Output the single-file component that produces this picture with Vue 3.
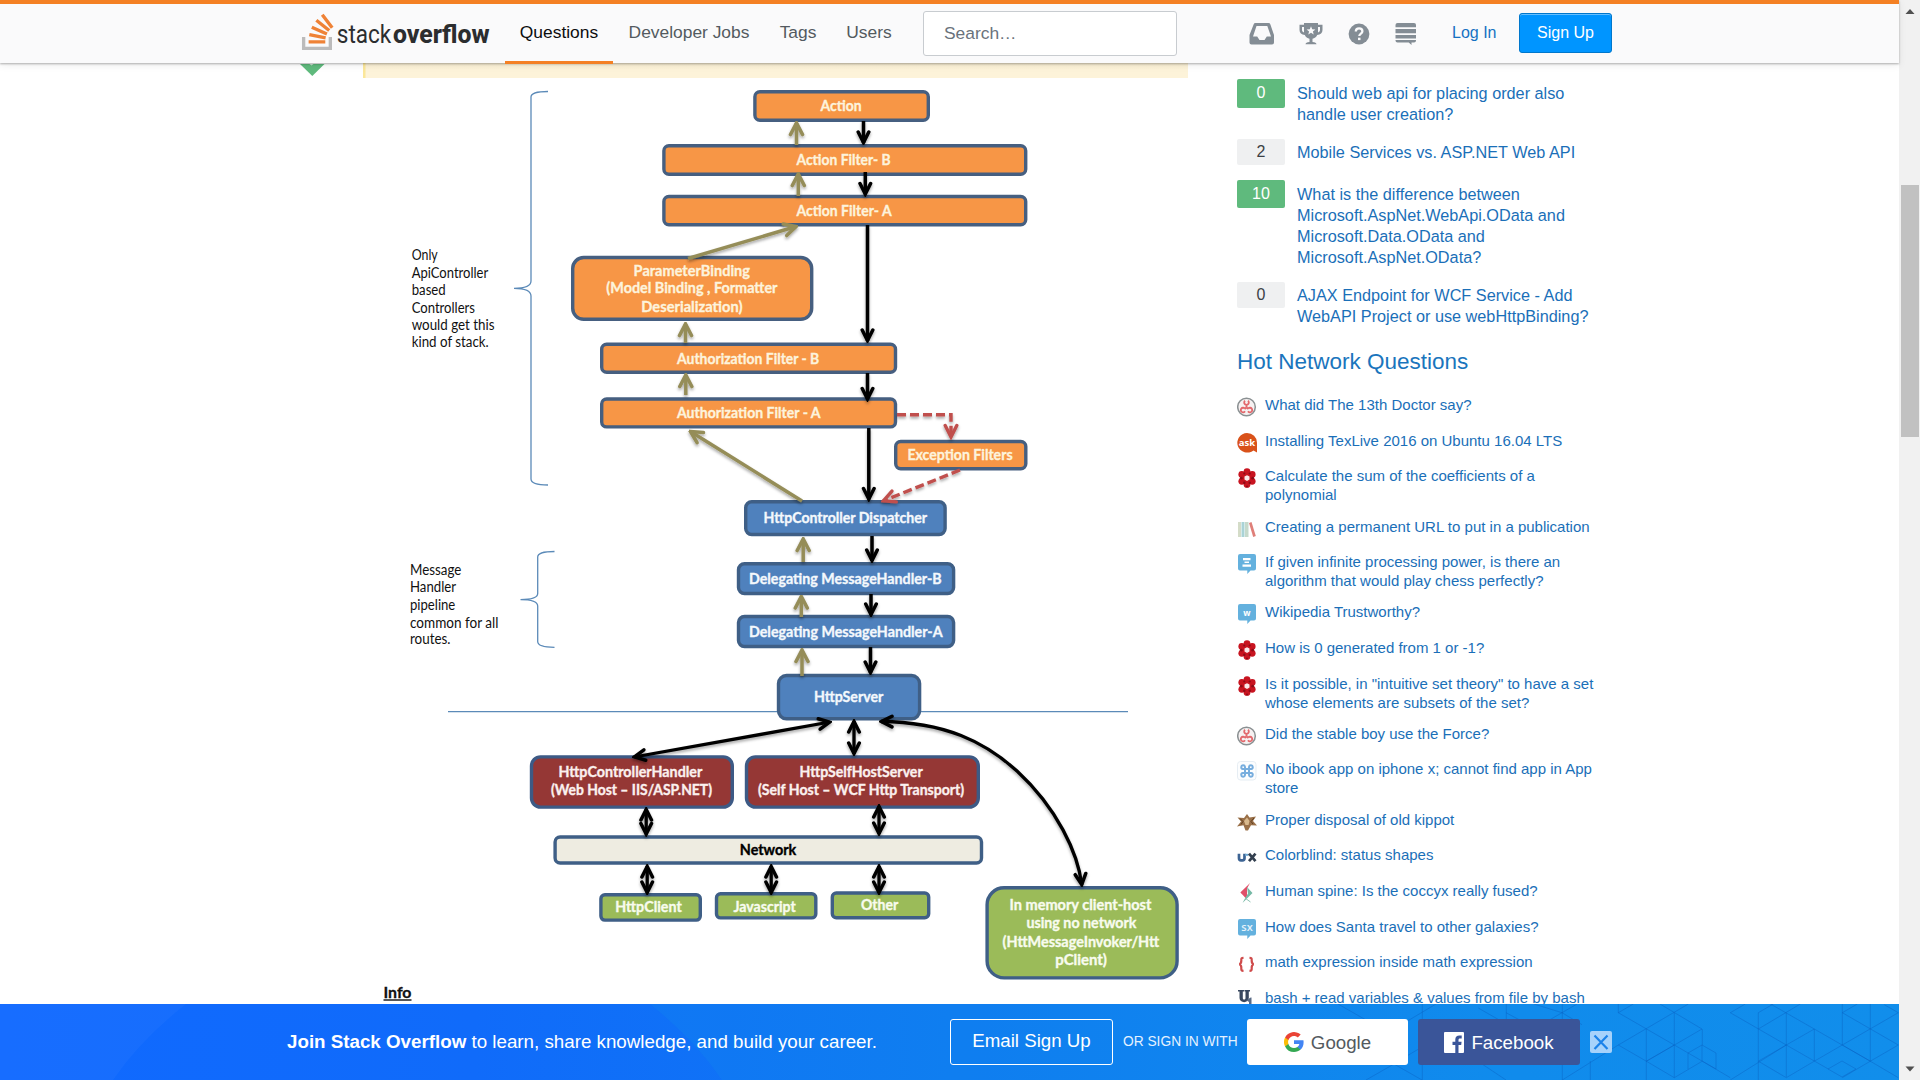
<script setup>
const navLinks = [
  { label: 'Questions', width: 108, active: true },
  { label: 'Developer Jobs', width: 150 },
  { label: 'Tags', width: 66 },
  { label: 'Users', width: 74 },
]

const related = [
  { votes: 0, accepted: true, lines: ['Should web api for placing order also', 'handle user creation?'] },
  { votes: 2, accepted: false, lines: ['Mobile Services vs. ASP.NET Web API'] },
  {
    votes: 10,
    accepted: true,
    lines: ['What is the difference between', 'Microsoft.AspNet.WebApi.OData and', 'Microsoft.Data.OData and', 'Microsoft.AspNet.OData?'],
  },
  { votes: 0, accepted: false, lines: ['AJAX Endpoint for WCF Service - Add', 'WebAPI Project or use webHttpBinding?'] },
]

const hot = [
  { icon: 'scifi', lines: ['What did The 13th Doctor say?'] },
  { icon: 'ubuntu', lines: ['Installing TexLive 2016 on Ubuntu 16.04 LTS'] },
  { icon: 'mma', lines: ['Calculate the sum of the coefficients of a', 'polynomial'] },
  { icon: 'books', lines: ['Creating a permanent URL to put in a publication'] },
  { icon: 'chess', lines: ['If given infinite processing power, is there an', 'algorithm that would play chess perfectly?'] },
  { icon: 'writers', lines: ['Wikipedia Trustworthy?'] },
  { icon: 'mma', lines: ['How is 0 generated from 1 or -1?'] },
  { icon: 'mma', lines: ['Is it possible, in "intuitive set theory" to have a set', 'whose elements are subsets of the set?'] },
  { icon: 'scifi', lines: ['Did the stable boy use the Force?'] },
  { icon: 'apple', lines: ['No ibook app on iphone x; cannot find app in App', 'store'] },
  { icon: 'judaism', lines: ['Proper disposal of old kippot'] },
  { icon: 'ux', lines: ['Colorblind: status shapes'] },
  { icon: 'biology', lines: ['Human spine: Is the coccyx really fused?'] },
  { icon: 'sx', lines: ['How does Santa travel to other galaxies?'] },
  { icon: 'tex', lines: ['math expression inside math expression'] },
  { icon: 'unix', lines: ['bash + read variables & values from file by bash'] },
]

/* Diagram nodes: outer edges x1,y1,x2,y2, corner radius, text lines [text, left, right, baseline] */
const nodes = [
  { k: 'orange', b: [753.2, 90, 930, 122], r: 5, t: [['Action', 820.6, 861.7, 111.2]] },
  { k: 'orange', b: [662.2, 144, 1027.4, 176], r: 5, t: [['Action Filter- B', 796.5, 890.7, 164.8]] },
  { k: 'orange', b: [662.2, 194.8, 1027.4, 226.4], r: 5, t: [['Action Filter- A', 796.5, 891.6, 215.5]] },
  {
    k: 'orange', b: [571, 255.8, 813.4, 321], r: 11,
    t: [['ParameterBinding', 633.6, 750, 275.6], ['(Model Binding , Formatter', 606.3, 777.5, 293.4], ['Deserialization)', 641.3, 742.5, 312]],
  },
  { k: 'orange', b: [600, 342.5, 897.2, 374], r: 5, t: [['Authorization Filter - B', 677, 819.3, 363.8]] },
  { k: 'orange', b: [600, 397.3, 897.2, 428.6], r: 5, t: [['Authorization Filter - A', 677, 820.6, 417.6]] },
  { k: 'orange', b: [894, 439.8, 1027.5, 470.4], r: 5, t: [['Exception Filters', 907.4, 1012.6, 460]] },
  { k: 'blue', b: [744, 500, 946.8, 536.2], r: 6, t: [['HttpController Dispatcher', 763.6, 927, 523.2]] },
  { k: 'blue', b: [736.8, 562, 955.3, 595.2], r: 6, t: [['Delegating MessageHandler-B', 749, 941.6, 584.3]] },
  { k: 'blue', b: [736.8, 614.8, 955.3, 648.2], r: 6, t: [['Delegating MessageHandler-A', 749, 942.6, 637.3]] },
  { k: 'blue', b: [776.8, 673.8, 921.3, 720.5], r: 8, t: [['HttpServer', 814, 883.4, 702.2]] },
  { k: 'red', b: [529.8, 755.2, 734, 808.8], r: 9, t: [['HttpControllerHandler', 558.5, 702.3, 777.3], ['(Web Host – IIS/ASP.NET)', 551, 712, 795.3]] },
  { k: 'red', b: [744.8, 755.2, 980, 808.8], r: 9, t: [['HttpSelfHostServer', 799.5, 922.7, 776.8], ['(Self Host – WCF Http Transport)', 758, 964.2, 795.3]] },
  { k: 'cream', b: [553.4, 835.3, 983.2, 864.7], r: 5, t: [['Network', 739.8, 796.3, 855.2]] },
  { k: 'green', b: [599.2, 893, 702, 921.8], r: 4, t: [['HttpClient', 615.3, 681.7, 912]] },
  { k: 'green', b: [714.8, 892, 817.5, 919.6], r: 4, t: [['Javascript', 733.5, 795.7, 911.5]] },
  { k: 'green', b: [830.6, 891.3, 930.4, 919.4], r: 4, t: [['Other', 861, 898.3, 910.4]] },
  {
    k: 'green', b: [985.4, 886, 1178.8, 979.6], r: 17,
    t: [['In memory client-host', 1009.6, 1151.4, 910], ['using no network', 1026.4, 1136.4, 928], ['(HttMessageInvoker/Htt', 1002.5, 1159.2, 946.5], ['pClient)', 1055.2, 1107, 965.2]],
  },
]

const sideNotes = [
  ['Only', 411.7, 26, 260.3], ['ApiController', 411.7, 76.5, 278], ['based', 411.7, 34, 295.3],
  ['Controllers', 411.7, 63.3, 313], ['would get this', 411.7, 82.8, 330], ['kind of stack.', 411.7, 77, 347],
  ['Message', 410, 51.3, 575], ['Handler', 410, 46, 592.3], ['pipeline', 410, 45.3, 610],
  ['common for all', 410, 88.5, 627.5], ['routes.', 410, 40.5, 644.3],
]

const olive = [
  [796.5, 145, 796.5, 123], [798.3, 196, 798.3, 174], [688, 258.5, 796, 226.5], [685.5, 343, 685.5, 324],
  [685.8, 395, 685.8, 375], [802, 501, 690.5, 431.5], [803.2, 562, 803.2, 539], [801.3, 617, 801.3, 596.5], [802, 676, 802, 650],
]
const black = [
  [863.5, 121, 863.5, 143], [865.3, 172, 865.3, 194.5], [867.5, 225, 867.5, 341], [867.5, 373, 867.5, 399.5],
  [868.8, 428, 868.8, 499.5], [872, 536, 872, 561], [871, 594, 871, 615], [870.5, 647, 870.5, 673],
]
const both = [
  [830, 722, 634, 757], [854, 721, 854, 754], [646.2, 809, 646.2, 834.5], [879, 806, 879, 834],
  [647.2, 866, 647.2, 893], [771.2, 866, 771.2, 893], [879, 866, 879, 893],
]
</script>

<template>
  <div class="window">
    <div class="page">
      <header class="topbar">
        <svg class="logo" width="196" height="44" viewBox="300 9 196 44">
          <g transform="translate(292.2 6.6) scale(.432 .418)">
            <path fill="#bcbbbb" d="M84.4 93.8V70.6h7.7v30.9H22.6V70.6h7.7v23.2z" />
            <path fill="#ef8236" d="M38.8 68.4l37.8 7.9 1.6-7.6-37.8-7.9-1.6 7.6zM43.8 50.4l35 16.3 3.2-7-35-16.4-3.2 7.1zM53.5 33.2l29.7 24.7 4.9-5.9-29.7-24.7-4.9 5.9zM72.7 14.9l-6.2 4.6 23 31 6.2-4.6-23-31zM38 86h38.6v-7.7H38V86z" />
          </g>
          <text class="word" x="336.8" y="42.3" textLength="54.5" lengthAdjust="spacingAndGlyphs">stack</text>
          <text class="word strong" x="393" y="42.3" textLength="96.5" lengthAdjust="spacingAndGlyphs">overflow</text>
        </svg>
        <nav class="nav">
          <a v-for="l in navLinks" :key="l.label" :class="{ active: l.active }" :style="{ width: l.width + 'px' }">{{ l.label }}</a>
        </nav>
        <div class="search">Search…</div>
        <div class="tools">
          <svg width="26" height="22" viewBox="0 0 26 22"><path fill="#848d95" fill-rule="evenodd" d="M6.5 0h13a2 2 0 0 1 1.9 1.4L25 12v7.5a2 2 0 0 1-2 2H2.500a2 2 0 0 1-2-2V12L4.600 1.400A2 2 0 0 1 6.500 0zM7.500 3 4 13.500h4.200l2.300 3.500h5l2.300-3.500H22L18.300 3z" /></svg>
          <svg width="26" height="22" viewBox="0 0 26 22"><path fill="#848d95" fill-rule="evenodd" d="M6 0h14v1.800h4.500V7c0 3-2 4.800-5.300 5-.9 2.200-2.700 3.300-4.700 3.700v3.200c2.600.2 4 .9 4 2.300h-11c0-1.400 1.400-2.100 4-2.300v-3.200c-2-.4-3.800-1.500-4.700-3.700C3.500 11.800 1.500 10 1.500 7V1.800H6zM4 4v3c0 1.300.7 2 2 2.400V4zm18 0h-2v5.400c1.300-.4 2-1.100 2-2.400zM13 3.200l-1.200 3-3.200.2 2.500 2-.8 3.100 2.700-1.700 2.700 1.700-.8-3.100 2.500-2-3.200-.2z" /></svg>
          <svg width="22" height="22" viewBox="0 0 22 22"><circle cx="11" cy="11" r="10.400" fill="#848d95" /><path d="M7.800 8.600c0-2.200 1.400-3.200 3.300-3.200s3.300 1.100 3.300 2.800c0 2.400-3.100 2.300-3.100 4.900" fill="none" stroke="#fafafb" stroke-width="2.300" /><rect x="10" y="14.700" width="2.500" height="2.400" fill="#fafafb" /></svg>
          <svg class="sites" width="22" height="22" viewBox="0 0 22 22"><path fill="#848d95" d="M2.500 0H19a2 2 0 0 1 2 2v2.300H.500V2a2 2 0 0 1 2-2zM.500 6H21v4.300H.500zM.500 12H21v3.500H.500zM.500 17H21v.5a2 2 0 0 1-2 2h-2.500V22L13.700 19.500H2.500a2 2 0 0 1-2-2z" /></svg>
        </div>
        <a class="login">Log In</a>
        <a class="signup">Sign Up</a>
      </header>

      <main class="content">
        <div class="votes">
          <svg width="26" height="13" viewBox="0 0 26 13"><path d="M0 0h24.500L12.300 12z" fill="#5fba7d" /><path d="M9.500 0h4l-2 1.600z" fill="#fff" opacity=".7" /></svg>
        </div>

        <section class="answer">
          <svg width="826" height="941" viewBox="363 63 826 941">
            <defs>
              <linearGradient id="strip" x1="0" y1="0" x2="0" y2="1"><stop offset="0" stop-color="#f8eed2" /><stop offset=".4" stop-color="#fdf3d9" /></linearGradient>
              <filter id="shade" x="363" y="63" width="826" height="941" filterUnits="userSpaceOnUse">
                <feDropShadow dx="0" dy="2" stdDeviation="1.500" flood-color="#000" flood-opacity=".35" />
              </filter>
              <marker id="tip-olive" viewBox="-16 -9 18 18" markerWidth="18" markerHeight="18" markerUnits="userSpaceOnUse" orient="auto-start-reverse"><path d="M-11.500-6 0 0-11.500 6" fill="none" stroke="#958d59" stroke-width="3.600" stroke-linecap="round" /></marker>
              <marker id="tip-black" viewBox="-16 -9 18 18" markerWidth="18" markerHeight="18" markerUnits="userSpaceOnUse" orient="auto-start-reverse"><path d="M-11-5.300-.5 0-11 5.300" fill="none" stroke="#000" stroke-width="3.500" stroke-linecap="round" /></marker>
              <marker id="tip-red" viewBox="-16 -9 18 18" markerWidth="18" markerHeight="18" markerUnits="userSpaceOnUse" orient="auto-start-reverse"><path d="M-12-5.800-.5 0-12 5.800" fill="none" stroke="#c0504d" stroke-width="3.400" stroke-linecap="round" /></marker>
            </defs>
            <rect x="363" y="63" width="825" height="15" fill="url(#strip)" />
            <rect x="363" y="63" width="2.500" height="15" fill="#fbe79a" />

            <g fill="none" stroke="#5b8ab8" stroke-width="1.300">
              <path d="M548 91.500C538 91.500 531 93 531 97V281C531 286 526 288.300 514 288.300 526 288.300 531 290.500 531 296V479C531 483.500 538 485 548 485" />
              <path d="M554.500 551.500C545 551.500 537.700 552.500 537.700 557V593.500C537.700 598 532 599.600 520.500 599.600 532 599.600 537.700 601.500 537.700 606V641.500C537.700 646 545 647.300 554.500 647.300" />
              <path d="M448 711.700H1128" />
            </g>

            <g v-for="(n, i) in nodes" :key="i" :class="['node', n.k]">
              <rect :x="n.b[0] + 1.7" :y="n.b[1] + 1.7" :width="n.b[2] - n.b[0] - 3.4" :height="n.b[3] - n.b[1] - 3.4" :rx="n.r" />
              <text v-for="t in n.t" :key="t[0]" :x="t[1]" :y="t[3]" :textLength="t[2] - t[1]" lengthAdjust="spacingAndGlyphs">{{ t[0] }}</text>
            </g>

            <g filter="url(#shade)" fill="none">
              <line v-for="(a, i) in olive" :key="'o' + i" :x1="a[0]" :y1="a[1]" :x2="a[2]" :y2="a[3]" stroke="#958d59" stroke-width="3.500" marker-end="url(#tip-olive)" />
              <line v-for="(a, i) in black" :key="'b' + i" :x1="a[0]" :y1="a[1]" :x2="a[2]" :y2="a[3]" stroke="#000" stroke-width="3.500" marker-end="url(#tip-black)" />
              <line v-for="(a, i) in both" :key="'d' + i" :x1="a[0]" :y1="a[1]" :x2="a[2]" :y2="a[3]" stroke="#000" stroke-width="3.300" marker-start="url(#tip-black)" marker-end="url(#tip-black)" />
              <path d="M881 721.500C945 722 985 742 1017 771 1057 808 1078 853 1081.800 885" stroke="#000" stroke-width="3.300" marker-start="url(#tip-black)" marker-end="url(#tip-black)" />
              <g stroke="#c0504d" stroke-width="3.400" stroke-dasharray="9 4">
                <path d="M897 414.800H951V437.500" marker-end="url(#tip-red)" />
                <path d="M960 470 883 501" marker-end="url(#tip-red)" />
              </g>
            </g>

            <text v-for="s in sideNotes" :key="s[0]" class="side" :x="s[1]" :y="s[3]" :textLength="s[2]" lengthAdjust="spacingAndGlyphs">{{ s[0] }}</text>
            <text class="info" x="383.500" y="998" textLength="28" lengthAdjust="spacingAndGlyphs">Info</text>
            <rect x="383.500" y="999.300" width="28" height="1.400" fill="#111" />
          </svg>
        </section>

        <aside class="sidebar">
          <div v-for="q in related" :key="q.lines[0]" :class="['rel', { accepted: q.accepted }]">
            <span class="count">{{ q.votes }}</span>
            <a class="rel-link"><span v-for="l in q.lines" :key="l">{{ l }}</span></a>
          </div>
          <h2>Hot Network Questions</h2>
          <ul>
            <li v-for="q in hot" :key="q.lines[0]">
              <svg class="fav" width="20" height="20" viewBox="0 0 20 20">
                <g v-if="q.icon === 'scifi'" fill="none">
                  <circle cx="9.500" cy="10" r="8.800" stroke="#8a9092" stroke-width="1.500" fill="#f6f1f1" />
                  <g stroke="#e2686c" stroke-width="1.800">
                    <path d="M8 3.800a2.300 2.300 0 1 0 3 0M9.500 8v2.500" />
                    <path d="M7.600 11.300a2.300 2.300 0 1 0 .4 3M11.400 11.300a2.300 2.300 0 1 1-.4 3M9.500 10.500l-2 1.500M9.500 10.500l2 1.500" />
                  </g>
                </g>
                <g v-else-if="q.icon === 'ubuntu'">
                  <path d="M10 0a10 9.800 0 0 1 10 9.800V19.500L16.500 17.500A10 9.800 0 1 1 10 0z" fill="#d9521a" />
                  <text x="10" y="13" text-anchor="middle" font-size="9.500" font-weight="700" fill="#fff" class="glyph">ask</text>
                </g>
                <g v-else-if="q.icon === 'mma'">
                  <g fill="#c81420"><circle cx="10" cy="3.600" r="3.400" /><circle cx="4.800" cy="6.500" r="3.400" /><circle cx="15.200" cy="6.500" r="3.400" /><circle cx="4.800" cy="13.300" r="3.400" /><circle cx="15.200" cy="13.300" r="3.400" /><circle cx="10" cy="16.400" r="3.400" /><circle cx="10" cy="10" r="5" /></g>
                  <g fill="#8d0b16"><circle cx="7.300" cy="5.500" r="1.100" /><circle cx="12.700" cy="5.500" r="1.100" /><circle cx="4.300" cy="10.200" r="1.400" /><circle cx="15.700" cy="10.200" r="1.400" /><circle cx="7.300" cy="14.800" r="1.200" /><circle cx="12.700" cy="14.800" r="1.200" /><circle cx="10" cy="18.500" r="1" /></g>
                  <path d="M10 7.200l2.500 1.400v3L10 13l-2.500-1.400v-3z" fill="#fbe9ea" />
                </g>
                <g v-else-if="q.icon === 'books'">
                  <path d="M1 3h3v15H1z" fill="#d4dcc8" /><path d="M4.500 3h3v15h-3z" fill="#a9d3d6" /><path d="M8 3h3.500v15H8z" fill="#c5d9cb" />
                  <path d="M12 4l2.500-1 4.300 14-2.600 1z" fill="#df7f79" />
                </g>
                <g v-else-if="['chess', 'writers', 'sx'].includes(q.icon)">
                  <path d="M3 0h14a2 2 0 0 1 2 2v12.500a2 2 0 0 1-2 2h-3.500L10.300 20v-3.500H3a2 2 0 0 1-2-2V2a2 2 0 0 1 2-2z" fill="#64b1de" />
                  <path v-if="q.icon === 'chess'" d="M6 4h7.500v2.200H6zM7.500 7.500h4.500V9H7.500zM5.500 10.500h8.500v2.300H5.500z" fill="#fff" />
                  <text v-else-if="q.icon === 'writers'" x="10" y="11.500" text-anchor="middle" font-size="8.500" font-weight="700" fill="#fff" class="glyph">w</text>
                  <text v-else x="10" y="12" text-anchor="middle" font-size="11" font-weight="600" fill="#e6f3fb" class="glyph">sx</text>
                </g>
                <g v-else-if="q.icon === 'apple'" fill="none">
                  <rect x=".500" y=".500" width="18.500" height="18.500" rx="3" stroke="#e6edf3" fill="#fcfdfe" />
                  <path d="M8 8H5.800A1.900 1.900 0 1 1 8 5.800v8.400A1.900 1.900 0 1 1 5.800 12h8.400A1.900 1.900 0 1 1 12 14.200V5.800A1.900 1.900 0 1 1 14.200 8z" stroke="#78aede" stroke-width="2" />
                </g>
                <g v-else-if="q.icon === 'judaism'">
                  <path d="M10 2l2.500 3.500L19 4.500 16 9l4 4.500-6-.3L11 18.500H8.500L6.500 13.300 0 14.500 4 9.500.5 5.500 7 6z" fill="#9a7048" />
                  <path d="M10 5.500l2.500 3.500-1 4h-3L7 9z" fill="#d9b98d" /><path d="M3 6.500l3 3-2 3M17 6l-3 3.500 2 2.500" stroke="#5f3f22" fill="none" />
                </g>
                <g v-else-if="q.icon === 'ux'" fill="none" stroke-width="2.700">
                  <path d="M2 6.800v4.500a2 2 0 0 0 2 2h1.500a2 2 0 0 0 2-2V6.800" stroke="#3d6494" />
                  <path d="M8 7.800h3.500" stroke="#6aa5d0" stroke-width="2" /><path d="M12 6.600l6.500 7.500M18.500 6.600L12 14.100" stroke="#333f4f" />
                </g>
                <g v-else-if="q.icon === 'biology'">
                  <path d="M13 0 3.500 9.500 9 15.500V12L6.500 9.500 10 5.500z" fill="#e0506a" /><path d="M3.500 9.500 10 3.500V14z" fill="#e0506a" /><path d="M10 4l5.500 6L5.500 20 8.500 14.500 11 10.500z" fill="#76b9a6" /><path d="M8 15l5.500 4" stroke="#8fc4b5" />
                </g>
                <g v-else-if="q.icon === 'tex'" fill="none" stroke="#cf4b4b" stroke-width="2.200">
                  <path d="M6.500 3.800c-2.500 0-2.200 1-2.200 3 0 2-.3 3-2 3.400 1.700.4 2 1.400 2 3.400 0 2-.3 3.200 2.200 3.200M12.500 3.800c2.500 0 2.200 1 2.200 3 0 2 .3 3 2 3.400-1.700.4-2 1.400-2 3.400 0 2 .3 3.200-2.200 3.200" />
                </g>
                <g v-else>
                  <path d="M1 0h6v1.500H5.800V8c0 2 2.700 2 2.700 0V1.500H7.500V0H13v1.500h-1.200V8c0 5.500-9.300 5.500-9.300 0V1.500H1z" fill="#39485f" />
                  <path d="M9 10c3 0 3-2.500 5.500-2.500V20H12v-8z" fill="#5a6b86" />
                </g>
              </svg>
              <a><span v-for="l in q.lines" :key="l">{{ l }}</span></a>
            </li>
          </ul>
        </aside>
      </main>

      <footer class="banner">
        <svg class="pattern" width="1899" height="76" viewBox="0 1004 1899 76">
          <path d="M0 1004H186Q140 1040 113 1080H0z" fill="#fff" opacity=".03" />
          <path d="M650 1004Q695 1040 722 1080H1899V1004z" fill="#18a0e0" opacity=".14" />
          <g fill="none" stroke="#0a5fc0" stroke-opacity=".42" stroke-width="1">
            <path d="M1618.300 1004v8.700l56 32.300-28 16.200-28-16.200 70-41M1646.300 1029v51M1674.300 1012.700v65l-28-16.500M1618.300 1012.700l15-8.700M1660 1004l42 25-56 32.500M1702.300 1029v16M1674.300 1045l28 16.200 28 16.500M1702.300 1061.200l-28 16.500M1688 1069v-16l14-8 14 8v16l-14-8v-16" />
            <path d="M1730.300 1012.700l15-8.700M1730.300 1012.700l56 32.300M1758.300 1080v-67.300l15-8.700M1758.300 1029l42-25M1786.300 1012.700v32.300l28-16-56-32M1758.300 1061.200l28-16.200 42 24M1730.300 1080l56-35M1758.300 1061.200l28 16.500 28-16.500v-32.200M1786.300 1045v32" />
            <path d="M1842.300 1004v41l56-32.300M1842.300 1012.700l15-8.700M1842.300 1012.700l56 32.300-28 16.200-56-32.200M1870.300 1004v57.200l28 16.500M1814.300 1061.200l28-16.200 28 16.200-28 16.500M1828 1069l14-8 14 8-14 8zM1898.300 1012.700l-14-8" />
            <path d="M1338 1004l28 16M1422.300 1004v30M1394 1029l42-25M1506.300 1004v20l-28-16M1534 1004l28 8.700 15-8.700M1562.300 1004v20M1506 1012.700l30 16M1534 1029l28-16.300 20 12M1400 1060l22-13M1394 1064l28 16M1422.300 1064v16M1366 1080l28-16M1482 1064l24 16M1562.300 1080l56-35M1590.300 1061v19M1562.300 1064v16" />
          </g>
        </svg>
        <div class="pitch"><b>Join Stack Overflow</b> to learn, share knowledge, and build your career.</div>
        <a class="btn email">Email Sign Up</a>
        <span class="or">OR SIGN IN WITH</span>
        <a class="btn google">
          <svg width="20" height="20" viewBox="0 0 18 18"><path fill="#4285f4" d="M17.640 9.200c0-.64-.06-1.250-.16-1.840H9v3.480h4.840a4.140 4.140 0 0 1-1.800 2.720v2.260h2.920c1.700-1.570 2.680-3.880 2.680-6.620z" /><path fill="#34a853" d="M9 18c2.430 0 4.470-.8 5.960-2.180l-2.920-2.260c-.8.540-1.840.860-3.040.860-2.340 0-4.330-1.580-5.040-3.710H.960v2.330A9 9 0 0 0 9 18z" /><path fill="#fbbc05" d="M3.960 10.710a5.400 5.400 0 0 1 0-3.420V4.960H.960a9 9 0 0 0 0 8.080z" /><path fill="#ea4335" d="M9 3.580c1.320 0 2.500.45 3.440 1.350l2.580-2.590A9 9 0 0 0 .960 4.960l3 2.330C4.670 5.160 6.660 3.580 9 3.580z" /></svg>
          <span>Google</span>
        </a>
        <a class="btn facebook">
          <svg width="20" height="21" viewBox="0 0 20 21"><path fill="#fff" fill-rule="evenodd" d="M1 0h18a1 1 0 0 1 1 1v19a1 1 0 0 1-1 1h-4.500v-8h2.700l.4-3.200h-3.100V8c0-.9.300-1.500 1.600-1.500h1.600V3.600c-.3 0-1.300-.1-2.400-.1-2.400 0-4 1.500-4 4.100v2.200H8.500V13h2.800v8H1a1 1 0 0 1-1-1V1a1 1 0 0 1 1-1z" /></svg>
          <span>Facebook</span>
        </a>
        <a class="close"><svg width="22" height="22" viewBox="0 0 22 22"><path d="M4.500 4.500l13 13.500M17.500 4.500l-13 13.500" stroke="#1a82ea" stroke-width="2.200" fill="none" /></svg></a>
      </footer>
    </div>

    <div class="scrollbar">
      <svg width="20" height="20" viewBox="0 0 20 20"><path d="M5.500 14 10 9l4.500 5z" fill="#505050" /></svg>
      <div class="thumb"></div>
      <svg class="down" width="20" height="20" viewBox="0 0 20 20"><path d="M5.500 6.500 10 11.500l4.500-5z" fill="#505050" /></svg>
    </div>
  </div>
</template>

<style>
body { background: #fff; overflow: hidden; }
</style>

<style scoped>
.window { display: flex; width: 1920px; height: 1080px; overflow: hidden; font-family: "Liberation Sans", Arial, sans-serif; background: #fff; }
.page { width: 1899px; height: 1080px; display: flex; flex-direction: column; flex: none; }

.topbar { position: relative; z-index: 1; box-sizing: border-box; height: 63px; flex: none; display: flex; align-items: center; padding-left: 300px; border-top: 4px solid #f48024; background: #fafafb; box-shadow: 0 1px 2px rgba(12, 13, 14, .3), 0 2px 8px rgba(12, 13, 14, .08); }
.logo { margin-top: -3px; flex: none; }
.word { font-family: Roboto, sans-serif; font-size: 26px; font-weight: 400; fill: #2b2d2f; }
.word.strong { font-weight: 800; }
.nav { display: flex; height: 59px; margin-left: 9px; gap: 1px; }
.nav a { box-sizing: border-box; height: 60px; line-height: 56px; text-align: center; font-size: 17.4px; color: #535a60; white-space: nowrap; }
.nav a.active { color: #0c0d0e; border-bottom: 3px solid #f48024; }
.search { box-sizing: border-box; width: 254px; height: 45px; margin-left: 17px; margin-top: -1px; padding-left: 20px; line-height: 42px; font-size: 17.4px; color: #6a737c; border: 1px solid #c8ccd0; border-radius: 3px; background: #fff; }
.tools { display: flex; gap: 23.500px; margin-left: 71.500px; align-items: center; }
.tools svg { display: block; }
.tools .sites { margin-left: 1.500px; }
.login { margin-left: 35.500px; margin-top: -2px; width: 47px; font-size: 16px; color: #1571c2; white-space: nowrap; }
.signup { box-sizing: border-box; margin-left: 20px; margin-top: -1px; width: 93px; height: 40px; line-height: 37px; text-align: center; font-size: 16px; color: #fff; background: #0095ff; border: 1px solid #0077cc; border-radius: 3px; box-shadow: inset 0 1px 0 #66bfff; }

.content { display: flex; height: 941px; flex: none; overflow: hidden; }
.votes { width: 63px; margin-left: 300px; flex: none; }
.answer { width: 826px; flex: none; }
.answer svg, .fav { display: block; }
.node rect { stroke: #3f5f86; stroke-width: 3.4px; }
.node text { font-family: Lato, "Open Sans", sans-serif; font-size: 14.6px; font-weight: 700; stroke-width: .35px; }
.orange rect { fill: #f79646; stroke: #465f80; }
.orange text { fill: #fdf3dc; stroke: #fdf3dc; }
.blue rect { fill: #4f81bd; }
.blue text { fill: #f4f8fc; stroke: #f4f8fc; }
.red rect { fill: #953735; stroke: #3d5a85; }
.red text { fill: #fbf0ee; stroke: #fbf0ee; }
.cream rect { fill: #eeece1; }
.cream text { fill: #000; stroke: #000; }
.green rect { fill: #9bbb59; }
.green text { fill: #f8fbee; stroke: #f8fbee; }
.side { font-family: Lato, "Open Sans", sans-serif; font-size: 14.6px; fill: #111; }
.info { font-family: Lato, "Open Sans", sans-serif; font-size: 15.5px; font-weight: 700; fill: #111; stroke: #111; stroke-width: .3px; }

.sidebar { width: 375px; margin-left: 48px; padding-top: 16px; flex: none; }
.rel { display: flex; gap: 12px; min-height: 26.800px; margin-bottom: 14.200px; }
.count { box-sizing: border-box; width: 48px; height: 26px; line-height: 26px; flex: none; text-align: center; font-size: 16px; color: #3b4045; background: #eff0f1; border-radius: 2px; }
.accepted .count { height: 28.500px; line-height: 28px; color: #fff; background: #5fba7d; }
.rel-link { padding-top: 2.800px; font-size: 16.25px; line-height: 21px; color: #1a6fb8; white-space: nowrap; }
.accepted .rel-link { padding-top: 3.700px; }
.rel-link span, li span { display: block; }
h2 { margin: 21.300px 0 0; font-size: 22.5px; line-height: 28px; font-weight: 400; color: #1a75bd; }
ul { list-style: none; margin: 19.200px 0 0; padding: 0; }
li { display: flex; min-height: 23.300px; margin-bottom: 12.300px; font-size: 15px; line-height: 19px; color: #1a6fb8; white-space: nowrap; }
.fav { width: 20px; margin: 2px 8px 0 0; flex: none; }
.glyph { font-family: "Open Sans", sans-serif; }

.banner { position: relative; height: 76px; flex: none; display: flex; align-items: center; background: linear-gradient(90deg, #1069ff 0%, #106bfa 25%, #0f78f3 50%, #1088ee 80%, #118bed 100%); color: #fff; overflow: hidden; white-space: nowrap; }
.banner > * { position: relative; }
.banner .pattern { position: absolute; left: 0; top: 0; }
.pitch { width: 663px; margin-left: 287px; font-size: 18.75px; }
.btn { box-sizing: border-box; height: 46px; border-radius: 3px; display: flex; align-items: center; justify-content: center; font-size: 18.7px; }
.email { width: 163px; padding-bottom: 2px; border: 1px solid #fff; }
.or { width: 124px; margin-left: 10px; margin-top: -2px; font-size: 13.75px; color: #e4f1ff; }
.google { width: 161px; gap: 7px; background: #fff; color: #535a60; }
.google span, .facebook span { padding-top: 1px; }
.facebook { width: 162px; margin-left: 10px; gap: 7px; background: #3a5599; }
.close { display: block; width: 22px; height: 22px; margin-left: 10px; border-radius: 2px; background: #a6d2fb; }
.close svg { display: block; }

.scrollbar { width: 21px; height: 1080px; flex: none; display: flex; flex-direction: column; align-items: center; background: #f1f1f1; }
.thumb { width: 18px; height: 252px; margin-top: 165px; background: #c1c1c1; }
.down { margin-top: auto; }
</style>
